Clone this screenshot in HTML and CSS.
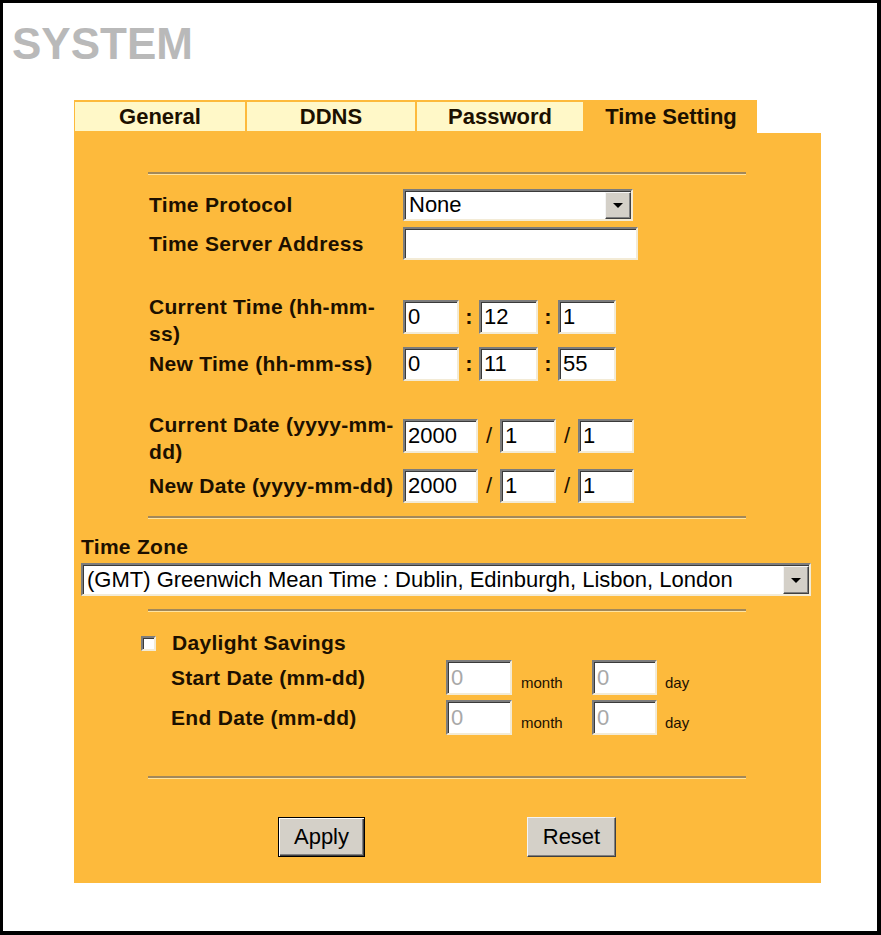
FILE: index.html
```html
<!DOCTYPE html>
<html>
<head>
<meta charset="utf-8">
<title>SYSTEM - Time Setting</title>
<link rel="stylesheet" href="styles.css">
</head>
<body>
<div class="frame">
  <h1 class="title">SYSTEM</h1>
  <div class="panel">
    <div class="tabrow">
      <div class="tabs">
        <div class="tab t1">General</div>
        <div class="tab t2">DDNS</div>
        <div class="tab t3">Password</div>
        <div class="tab active">Time Setting</div>
      </div>
      <div class="tabfill"></div>
    </div>
    <div class="body">
      <div class="rule r1"></div>

      <div class="row rtp">
        <div class="lbl">Time Protocol</div>
        <div class="select sel-proto"><span class="seltext">None</span><span class="selbtn"><span class="tri"></span></span></div>
      </div>
      <div class="row rtsa">
        <div class="lbl">Time Server Address</div>
        <input class="field f-server" type="text" value="">
      </div>

      <div class="row two rct">
        <div class="lbl lbl2l">Current Time (hh-mm-<br>ss)</div>
        <div class="fields">
          <input class="field w56" type="text" value="0"><span class="sep">:</span><input class="field w59" type="text" value="12"><span class="sep">:</span><input class="field w58" type="text" value="1">
        </div>
      </div>
      <div class="row rnt">
        <div class="lbl">New Time (hh-mm-ss)</div>
        <div class="fields">
          <input class="field w56" type="text" value="0"><span class="sep">:</span><input class="field w59" type="text" value="11"><span class="sep">:</span><input class="field w58" type="text" value="55">
        </div>
      </div>

      <div class="row two rcd">
        <div class="lbl lbl2l">Current Date (yyyy-mm-<br>dd)</div>
        <div class="fields fd">
          <input class="field w75" type="text" value="2000"><span class="sep sl">/</span><input class="field w56" type="text" value="1"><span class="sep sl">/</span><input class="field w56" type="text" value="1">
        </div>
      </div>
      <div class="row rnd">
        <div class="lbl">New Date (yyyy-mm-dd)</div>
        <div class="fields">
          <input class="field w75" type="text" value="2000"><span class="sep sl">/</span><input class="field w56" type="text" value="1"><span class="sep sl">/</span><input class="field w56" type="text" value="1">
        </div>
      </div>

      <div class="rule r2"></div>

      <div class="tzlabel">Time Zone</div>
      <div class="select sel-tz"><span class="seltext">(GMT) Greenwich Mean Time : Dublin, Edinburgh, Lisbon, London</span><span class="selbtn"><span class="tri"></span></span></div>

      <div class="rule r3"></div>

      <div class="dsrow">
        <span class="check"></span>
        <span class="dslabel">Daylight Savings</span>
      </div>
      <div class="drow dr1">
        <div class="dlbl">Start Date (mm-dd)</div>
        <input class="field dis w66" type="text" value="0"><span class="unit">month</span><input class="field dis w65" type="text" value="0"><span class="unit u2">day</span>
      </div>
      <div class="drow dr2">
        <div class="dlbl">End Date (mm-dd)</div>
        <input class="field dis w66" type="text" value="0"><span class="unit">month</span><input class="field dis w65" type="text" value="0"><span class="unit u2">day</span>
      </div>

      <div class="rule r4"></div>

      <div class="btnrow">
        <button class="btn apply" type="button">Apply</button>
        <button class="btn reset" type="button">Reset</button>
      </div>
    </div>
  </div>
</div>
</body>
</html>
```
FILE: styles.css
```css
html, body {
  margin: 0;
  padding: 0;
  background: #ffffff;
}

body {
  font-family: "Liberation Sans", Arial, sans-serif;
  color: #1c1000;
}

.frame {
  width: 881px;
  height: 935px;
  box-sizing: border-box;
  border-style: solid;
  border-color: #000;
  border-width: 3px 4px 4px 3px;
  background: #fff;
  overflow: hidden;
}

.title {
  margin: 19px 0 0 9px;
  font-size: 44px;
  line-height: 44px;
  font-weight: bold;
  color: #b9b9b9;
}

.panel {
  margin: 34px 0 0 71px;
  width: 747px;
}

/* tabs */
.tabrow {
  display: flex;
  height: 33px;
}

.tabs {
  display: flex;
  gap: 2px;
  width: 683px;
  box-sizing: border-box;
  padding: 2px 0 2px 1px;
  background: #fdba3c;
}

.tabfill {
  flex: 1;
  background: #fff;
}

.tab {
  display: flex;
  align-items: center;
  justify-content: center;
  height: 29px;
  background: #fff8c8;
  font-size: 22px;
  font-weight: bold;
  color: #1c1000;
}

.t1 { width: 170px; }
.t2 { width: 168px; }
.t3 { width: 166px; }
.tab.active {
  width: 172px;
  background: transparent;
}

/* body */
.body {
  background: #fdba3c;
  padding-bottom: 26px;
  overflow: hidden;
}

.rule {
  margin-left: 74px;
  width: 598px;
  height: 0;
  border-top: 2px solid #a2885a;
  border-bottom: 1px solid #ffe4a0;
}

.r1 { margin-top: 39px; }
.r2 { margin-top: 13px; }
.r3 { margin-top: 13px; }
.r4 { margin-top: 41px; }

.row {
  display: flex;
  align-items: center;
  padding-left: 75px;
}

.row.two {
  align-items: flex-start;
  height: 54px;
}

.lbl {
  width: 254px;
  flex: none;
  font-size: 21px;
  font-weight: bold;
  letter-spacing: 0.3px;
  line-height: 26px;
  white-space: nowrap;
}

.lbl2l {
  line-height: 27px;
}

.rtp { margin-top: 14px; height: 32px; }
.rtsa { margin-top: 6px; height: 33px; }
.rct { margin-top: 33px; }
.rct .fields { margin-top: 7px; }
.rnt { margin-top: 0; height: 34px; }
.rcd { margin-top: 30px; }
.rcd .fields { margin-top: 8px; }
.rnd { margin-top: 4px; height: 34px; }

.fields {
  display: flex;
  align-items: center;
}

.field {
  box-sizing: border-box;
  height: 34px;
  margin: 0;
  padding: 0 3px;
  background: #fff;
  border: 2px solid;
  border-color: #7c7c7c #f3ebd6 #f3ebd6 #7c7c7c;
  box-shadow: inset 1px 1px 0 #3a3a3a;
  font-family: "Liberation Sans", Arial, sans-serif;
  font-size: 22px;
  color: #000;
  outline: none;
}

.f-server { width: 235px; height: 33px; }
.w56 { width: 56px; }
.w58 { width: 58px; }
.w59 { width: 59px; }
.w65 { width: 65px; }
.w66 { width: 66px; }
.w75 { width: 75px; }

.sep {
  width: 20px;
  text-align: center;
  font-size: 22px;
  font-weight: bold;
  color: #1c1000;
}

.sep.sl {
  width: 22px;
  font-weight: normal;
}

/* selects */
.select {
  box-sizing: border-box;
  display: flex;
  align-items: center;
  background: #fff;
  border: 2px solid;
  border-color: #7c7c7c #f3ebd6 #f3ebd6 #7c7c7c;
  box-shadow: inset 1px 1px 0 #3a3a3a;
  font-size: 22px;
  color: #000;
}

.sel-proto {
  width: 230px;
  height: 32px;
}

.sel-tz {
  margin: 4px 0 0 7px;
  width: 730px;
  height: 33px;
}

.seltext {
  flex: 1;
  padding-left: 4px;
  white-space: nowrap;
  overflow: hidden;
}

.selbtn {
  box-sizing: border-box;
  width: 26px;
  align-self: stretch;
  margin: 1px 0 0 0;
  display: flex;
  align-items: center;
  justify-content: center;
  background: #d4d0c8;
  border: 1px solid;
  border-color: #f4f4f4 #404040 #404040 #f4f4f4;
  box-shadow: inset -1px -1px 0 #808080;
}

.tri {
  width: 0;
  height: 0;
  border-left: 5px solid transparent;
  border-right: 5px solid transparent;
  border-top: 5px solid #000;
}

/* time zone */
.tzlabel {
  margin: 16px 0 0 7px;
  font-size: 21px;
  font-weight: bold;
  letter-spacing: 0.3px;
  line-height: 24px;
}

/* daylight */
.dsrow {
  display: flex;
  align-items: center;
  height: 24px;
  margin-top: 19px;
  padding-left: 67px;
}

.check {
  box-sizing: border-box;
  width: 15px;
  height: 15px;
  background: #fff;
  border: 2px solid;
  border-color: #7c7c7c #f3ebd6 #f3ebd6 #7c7c7c;
  box-shadow: inset 1px 1px 0 #3a3a3a;
}

.dslabel {
  margin-left: 16px;
  font-size: 21px;
  font-weight: bold;
  letter-spacing: 0.3px;
}

.drow {
  display: flex;
  align-items: center;
  height: 35px;
  margin-top: 5px;
  padding-left: 97px;
}

.dlbl {
  width: 275px;
  flex: none;
  font-size: 21px;
  font-weight: bold;
  letter-spacing: 0.3px;
}

.drow .field {
  height: 35px;
}

.field.dis {
  color: #a8a8a8;
}

.unit {
  box-sizing: border-box;
  width: 80px;
  padding-left: 9px;
  align-self: flex-end;
  margin-bottom: 2px;
  font-size: 15px;
  line-height: 20px;
  color: #1c1000;
}

.unit.u2 {
  padding-left: 8px;
  width: auto;
}

/* buttons */
.btnrow {
  display: flex;
  margin-top: 38px;
  padding-left: 204px;
  gap: 162px;
}

.btn {
  box-sizing: border-box;
  height: 40px;
  margin: 0;
  padding: 0;
  background: #d4d0c8;
  font-family: "Liberation Sans", Arial, sans-serif;
  font-size: 22px;
  color: #000;
  cursor: default;
}

.apply {
  width: 87px;
  border: 1px solid #000;
  box-shadow: inset 1px 1px 0 #fff, inset -1px -1px 0 #404040, inset -2px -2px 0 #808080;
}

.reset {
  width: 89px;
  border: 1px solid;
  border-color: #f4f4f4 #404040 #404040 #f4f4f4;
  box-shadow: inset -1px -1px 0 #808080;
}
```
